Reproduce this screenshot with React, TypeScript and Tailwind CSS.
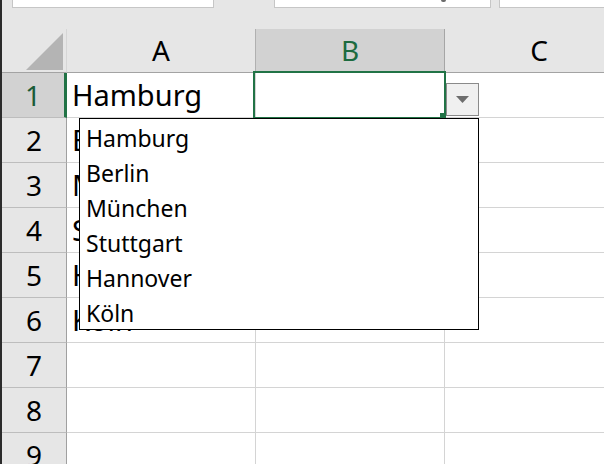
const cities = ["Hamburg", "Berlin", "München", "Stuttgart", "Hannover", "Köln"];
const rows = [1, 2, 3, 4, 5, 6, 7, 8, 9];

export default function App() {
  return (
    <div className="relative flex h-[464px] w-[604px] overflow-hidden bg-white font-['Noto_Sans',sans-serif] text-black">
      <div className="w-[2px] shrink-0 bg-[#2b2b2b]" />
      <div className="flex min-w-0 flex-1 flex-col">
        {/* toolbar remnants */}
        <div className="flex h-[29px] shrink-0 bg-[#e6e6e6]">
          <div className="ml-[10px] h-[8px] w-[202px] border-x border-b border-[#c6c6c6] bg-white" />
          <div className="relative ml-[60px] h-[8px] w-[217px] border-x border-b border-[#c6c6c6] bg-white">
            <span className="absolute left-[166px] top-[-2px] h-[4px] w-[5px] rounded-full bg-[#6b6b6b]" />
          </div>
          <div className="ml-[8px] h-[8px] flex-1 border-l border-b border-[#c6c6c6] bg-white" />
        </div>

        {/* grid */}
        <div className="grid w-[632px] grid-cols-[65px_189px_189px_189px] grid-rows-[44px] auto-rows-[45px]">
          <div className="relative border-b border-r border-b-[#a3a3a3] border-r-[#d6d6d6] bg-[#e6e6e6]">
            <svg className="absolute left-0 top-0" width="65" height="44" viewBox="0 0 65 44">
              <polygon points="24,41 61,41 61,4" fill="#b4b4b4" />
            </svg>
          </div>
          <div className="border-b border-r border-b-[#a3a3a3] border-r-[#b0b0b0] bg-[#e6e6e6] text-center text-[28px] leading-[43px]">A</div>
          <div className="border-b border-r border-b-[#a3a3a3] border-r-[#a6a6a6] bg-[#d2d2d2] text-center text-[28px] leading-[43px] text-[#1d6b40]">B</div>
          <div className="border-b border-r border-b-[#a3a3a3] border-r-[#bdbdbd] bg-[#e6e6e6] text-center text-[28px] leading-[43px]">C</div>

          {rows.map((r) => (
            <Row key={r} n={r} text={cities[r - 1]} />
          ))}
        </div>
      </div>

      {/* selection of B1 */}
      <div className="absolute left-[253px] top-[71px] h-[48px] w-[193px] border-2 border-[#217346]" />
      <div className="absolute left-[440px] top-[113px] h-[6px] w-[6px] bg-[#217346]" />

      {/* dropdown button */}
      <div className="absolute left-[446px] top-[83px] flex h-[33px] w-[33px] items-center justify-center border border-[#8a8a8a] bg-[#f0f0f0]">
        <svg width="13" height="7" viewBox="0 0 13 7">
          <polygon points="0,0 13,0 6.5,7" fill="#6d6d6d" />
        </svg>
      </div>

      {/* validation list */}
      <div className="absolute left-[79px] top-[118px] h-[212px] w-[400px] border border-black bg-white pt-[2px]">
        {cities.map((c) => (
          <div key={c} className="h-[35px] pl-[6px] text-[23px] leading-[35px]">
            {c}
          </div>
        ))}
      </div>
    </div>
  );
}

function Row({ n, text }: { n: number; text?: string }) {
  const active = n === 1;
  return (
    <>
      <div
        className={
          active
            ? "border-b border-r-[3px] border-b-[#bdbdbd] border-r-[#217346] bg-[#d2d2d2] text-center text-[28px] leading-[44px] text-[#1a5c38]"
            : "border-b border-r border-b-[#bdbdbd] border-r-[#a0a0a0] bg-[#e6e6e6] text-center text-[28px] leading-[44px]"
        }
      >
        {n}
      </div>
      <div className="whitespace-nowrap border-b border-r border-[#d4d4d4] pl-[5px] text-[29px] leading-[44px]">{text}</div>
      <div className="border-b border-r border-[#d4d4d4]" />
      <div className="border-b border-r border-[#d4d4d4]" />
    </>
  );
}
